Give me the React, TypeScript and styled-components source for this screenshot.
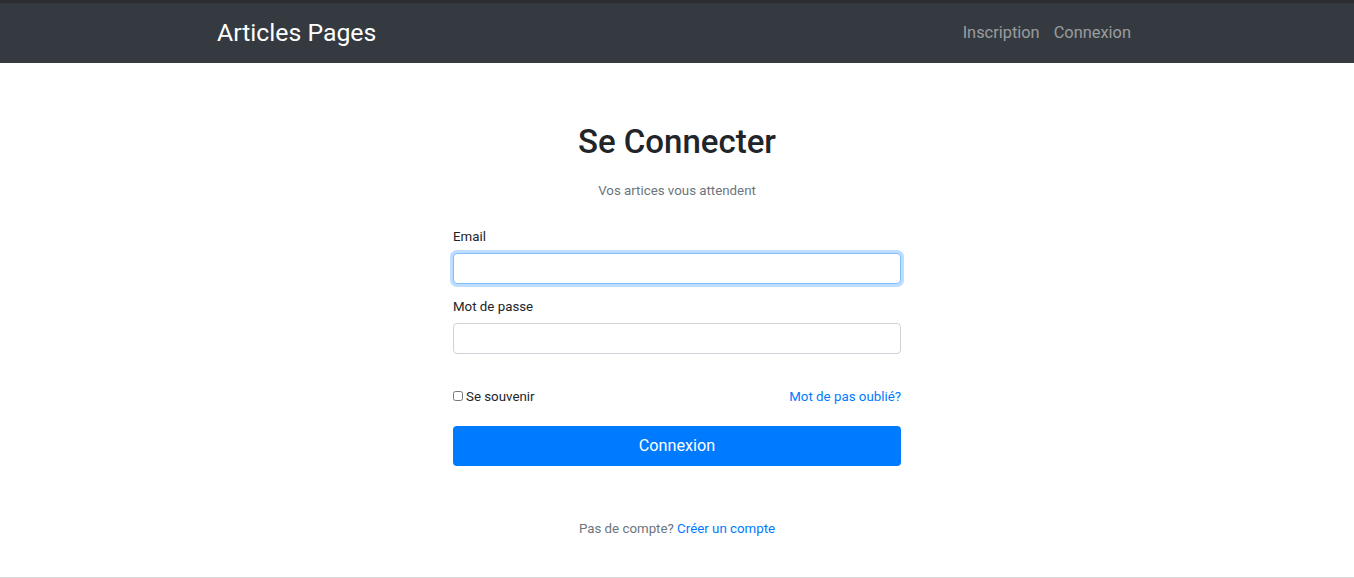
import styled, { createGlobalStyle } from 'styled-components'

const GlobalStyle = createGlobalStyle`
  html, body {
    margin: 0;
    padding: 0;
    background: #fff;
    font-family: Roboto, "Liberation Sans", Arial, sans-serif;
    color: #212529;
  }
  * { box-sizing: border-box; }
`

const Page = styled.div`
  height: 578px;
  display: flex;
  flex-direction: column;
  border-top: 3px solid #2b2d30;
  overflow: hidden;
`

const Navbar = styled.nav`
  height: 60px;
  flex: none;
  background: #343a40;
`

const Container = styled.div`
  max-width: 960px;
  height: 100%;
  margin: 0 auto;
  padding: 0 15px;
  display: flex;
  align-items: center;
  justify-content: space-between;
`

const Brand = styled.a`
  font-size: 24.8px;
  line-height: 1.2;
  color: #fff;
  text-decoration: none;
  padding-left: 5px;
`

const NavLinks = styled.div`
  display: flex;
  padding-right: 4px;
`

const NavLink = styled.a`
  font-size: 16.4px;
  line-height: 24px;
  color: rgba(255, 255, 255, 0.5);
  text-decoration: none;
  padding: 0 7px;
`

const Main = styled.main`
  flex: 1;
  display: flex;
  flex-direction: column;
  align-items: center;
  padding-top: 59px;
  border-bottom: 1px solid #d8d8d8;
`

const Title = styled.h1`
  margin: 0 0 18px;
  font-size: 33px;
  font-weight: 500;
  line-height: 1.2;
`

const Lead = styled.p`
  margin: 0 0 25px;
  font-size: 13.3px;
  line-height: 21px;
  color: #6c757d;
`

const Form = styled.form`
  width: 448px;
  display: flex;
  flex-direction: column;
`

const Group = styled.div`
  display: flex;
  flex-direction: column;
  & + & {
    margin-top: 12px;
  }
`

const Label = styled.label`
  font-size: 13.3px;
  line-height: 21px;
  margin-bottom: 6px;
`

const Input = styled.input<{ $focused?: boolean }>`
  height: 31px;
  padding: 4px 8px;
  font-size: 14px;
  border: 1px solid ${p => (p.$focused ? '#80bdff' : '#ced4da')};
  border-radius: 4px;
  outline: none;
  box-shadow: ${p => (p.$focused ? '0 0 0 3px rgba(0, 123, 255, 0.25)' : 'none')};
`

const OptionsRow = styled.div`
  display: flex;
  justify-content: space-between;
  align-items: center;
  margin-top: 32px;
  margin-bottom: 19px;
  font-size: 13.3px;
  line-height: 21px;
`

const Remember = styled.label`
  display: flex;
  align-items: center;
`

const Checkbox = styled.input`
  width: 10px;
  height: 10px;
  margin: 0 3px 0 0;
`

const Link = styled.a`
  color: #007bff;
  text-decoration: none;
`

const SubmitButton = styled.button`
  height: 40px;
  border: none;
  border-radius: 4px;
  background: #007bff;
  color: #fff;
  font-family: inherit;
  font-size: 16.2px;
`

const Footnote = styled.p`
  margin: 52px 0 0;
  font-size: 13.3px;
  line-height: 21px;
  color: #6c757d;
`

export default function App() {
  return (
    <>
      <GlobalStyle />
      <Page>
        <Navbar>
          <Container>
            <Brand href="#">Articles Pages</Brand>
            <NavLinks>
              <NavLink href="#">Inscription</NavLink>
              <NavLink href="#">Connexion</NavLink>
            </NavLinks>
          </Container>
        </Navbar>
        <Main>
          <Title>Se Connecter</Title>
          <Lead>Vos artices vous attendent</Lead>
          <Form onSubmit={e => e.preventDefault()}>
            <Group>
              <Label htmlFor="email">Email</Label>
              <Input id="email" type="email" $focused />
            </Group>
            <Group>
              <Label htmlFor="password">Mot de passe</Label>
              <Input id="password" type="password" />
            </Group>
            <OptionsRow>
              <Remember>
                <Checkbox type="checkbox" />
                Se souvenir
              </Remember>
              <Link href="#">Mot de pas oublié?</Link>
            </OptionsRow>
            <SubmitButton type="submit">Connexion</SubmitButton>
          </Form>
          <Footnote>
            Pas de compte? <Link href="#">Créer un compte</Link>
          </Footnote>
        </Main>
      </Page>
    </>
  )
}
